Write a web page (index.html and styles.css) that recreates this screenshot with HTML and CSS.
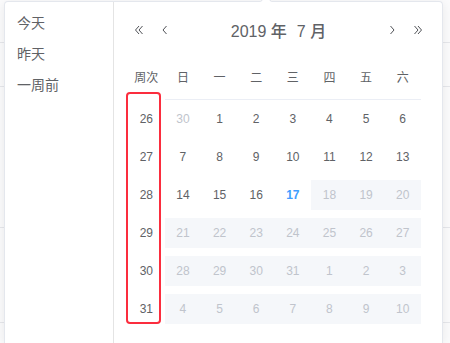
FILE: index.html
```html
<!DOCTYPE html>
<html lang="zh">
<head>
<meta charset="utf-8">
<link rel="stylesheet" href="styles.css">
</head>
<body>
<div class="page">
  <div class="bg-row bg-h43"></div>
  <div class="bg-row bg-h44"></div>
  <div class="bg-row bg-h141"></div>
  <div class="bg-row bg-h95"></div>
  <div class="bg-row bg-h19"></div>
</div>
<div class="panel">
  <span class="notch"></span>
  <aside class="sidebar">
    <div class="shortcut">今天</div>
    <div class="shortcut">昨天</div>
    <div class="shortcut">一周前</div>
  </aside>
  <section class="body">
    <header class="head">
      <div class="btns">
        <button class="btn" aria-label="前一年"><svg width="10" height="10" viewBox="0 0 10 10"><path d="M5 1L1.5 5L5 9M8.5 1L5 5L8.5 9"/></svg></button>
        <button class="btn" aria-label="上个月"><svg width="10" height="10" viewBox="0 0 10 10"><path d="M6.5 1L3 5L6.5 9"/></svg></button>
      </div>
      <div class="title"><span class="label">2019 年</span><span class="label">7 月</span></div>
      <div class="btns">
        <button class="btn" aria-label="下个月"><svg width="10" height="10" viewBox="0 0 10 10"><path d="M3.5 1L7 5L3.5 9"/></svg></button>
        <button class="btn" aria-label="后一年"><svg width="10" height="10" viewBox="0 0 10 10"><path d="M1.5 1L5 5L1.5 9M5 1L8.5 5L5 9"/></svg></button>
      </div>
    </header>
    <div class="table">
      <div class="thead">
        <div class="th th-week">周次</div>
        <div class="th">日</div><div class="th">一</div><div class="th">二</div><div class="th">三</div><div class="th">四</div><div class="th">五</div><div class="th">六</div>
      </div>
      <div class="tr">
        <div class="week">26</div>
        <div class="td prev">30</div><div class="td">1</div><div class="td">2</div><div class="td">3</div><div class="td">4</div><div class="td">5</div><div class="td">6</div>
      </div>
      <div class="tr">
        <div class="week">27</div>
        <div class="td">7</div><div class="td">8</div><div class="td">9</div><div class="td">10</div><div class="td">11</div><div class="td">12</div><div class="td">13</div>
      </div>
      <div class="tr">
        <div class="week">28</div>
        <div class="td">14</div><div class="td">15</div><div class="td">16</div><div class="td today">17</div><div class="td dis">18</div><div class="td dis">19</div><div class="td dis">20</div>
      </div>
      <div class="tr">
        <div class="week">29</div>
        <div class="td dis">21</div><div class="td dis">22</div><div class="td dis">23</div><div class="td dis">24</div><div class="td dis">25</div><div class="td dis">26</div><div class="td dis">27</div>
      </div>
      <div class="tr">
        <div class="week">30</div>
        <div class="td dis">28</div><div class="td dis">29</div><div class="td dis">30</div><div class="td dis">31</div><div class="td dis">1</div><div class="td dis">2</div><div class="td dis">3</div>
      </div>
      <div class="tr">
        <div class="week">31</div>
        <div class="td dis">4</div><div class="td dis">5</div><div class="td dis">6</div><div class="td dis">7</div><div class="td dis">8</div><div class="td dis">9</div><div class="td dis">10</div>
      </div>
      <span class="week-box"></span>
    </div>
  </section>
</div>
</body>
</html>
```

FILE: styles.css
```css
* { box-sizing: border-box; }
html, body { margin: 0; padding: 0; }
body {
  width: 450px;
  height: 343px;
  overflow: hidden;
  position: relative;
  background: #fbfbfc;
  font-family: "Liberation Sans", "Noto Sans CJK SC", sans-serif;
  color: #606266;
}
.page {
  display: flex;
  flex-direction: column;
}
.bg-row { border-bottom: 1px solid #e6e7eb; }
.bg-h43 { height: 43px; }
.bg-h44 { height: 44px; }
.bg-h141 { height: 141px; }
.bg-h95 { height: 95px; }
.bg-h19 { height: 19px; border-bottom: 0; }

.panel {
  position: absolute;
  left: 4px;
  top: 1px;
  width: 439px;
  height: 342px;
  background: #fff;
  border: 1px solid #e4e7ed;
  border-bottom-width: 0;
  border-radius: 4px 4px 0 0;
  box-shadow: 0 2px 12px rgba(0, 0, 0, 0.08);
  display: flex;
}
.notch {
  position: absolute;
  top: -5px;
  left: 257px;
  width: 8px;
  height: 8px;
  background: #fff;
  border-top: 1px solid #e4e7ed;
  border-left: 1px solid #e4e7ed;
  transform: rotate(45deg);
}
.sidebar {
  width: 109px;
  flex: none;
  border-right: 1px solid #e4e4e4;
  padding-top: 6px;
}
.shortcut {
  height: 31px;
  line-height: 31px;
  padding-left: 12px;
  font-size: 14px;
  color: #606266;
}
.body {
  flex: 1;
  display: flex;
  flex-direction: column;
}
.head {
  height: 56px;
  display: flex;
  align-items: center;
  padding: 0 16px 0 17px;
}
.btns {
  display: flex;
  gap: 10px;
}
.btn {
  width: 16px;
  height: 16px;
  padding: 0;
  border: 0;
  background: none;
  display: flex;
  align-items: center;
  justify-content: center;
}
.btn svg path {
  fill: none;
  stroke: #505257;
  stroke-width: 1;
}
.title {
  flex: 1;
  text-align: center;
  font-size: 16px;
  font-weight: 500;
  color: #606266;
}
.label { padding: 0 5px; }

.table {
  position: relative;
  margin-left: 14px;
  width: 293px;
}
.thead, .tr {
  display: grid;
  grid-template-columns: repeat(8, 1fr);
}
.th {
  font-size: 12px;
  line-height: 20px;
  padding: 10px 0 11px;
  text-align: center;
  border-bottom: 1px solid #ebeef5;
}
.th-week { border-bottom-color: transparent; }
.tr { padding: 4px 0; }
.week, .td {
  height: 30px;
  line-height: 30px;
  text-align: center;
  font-size: 12px;
  color: #606266;
}
.td.prev { color: #c0c4cc; }
.td.dis { background: #f5f7fa; color: #c0c4cc; }
.td.today { color: #409eff; font-weight: 700; }
.week-box {
  position: absolute;
  left: -2px;
  top: 34px;
  width: 35px;
  height: 232px;
  border: 2px solid #fb2d3e;
  border-radius: 4px;
}
```
